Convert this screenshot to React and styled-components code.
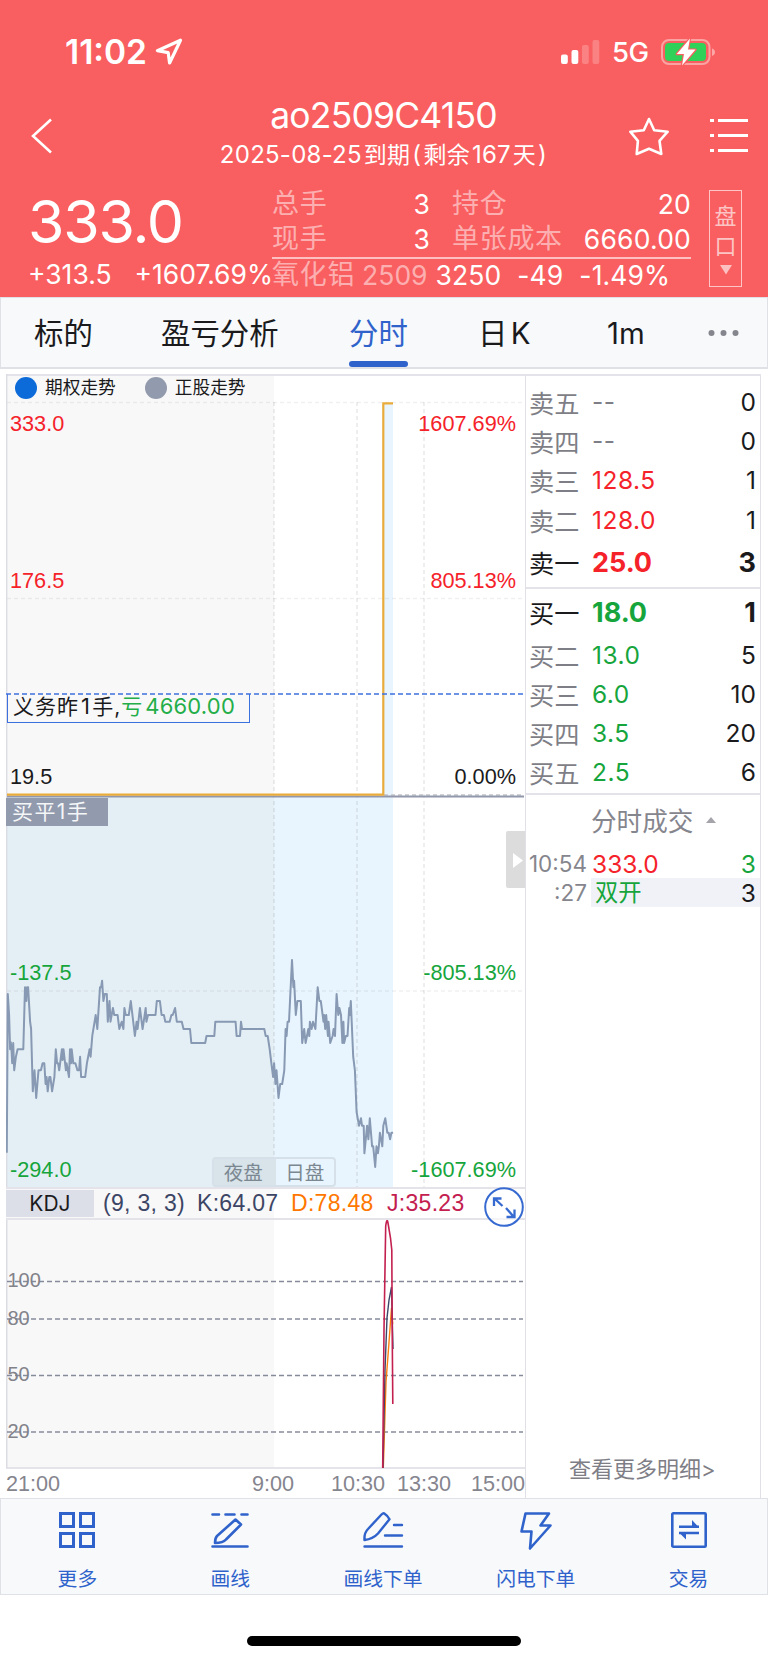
import React from "react";
import styled, { createGlobalStyle, css } from "styled-components";

const GlobalStyle = createGlobalStyle`
  * {
    box-sizing: border-box;
  }
  body {
    margin: 0;
    background: #fff;
    color: #1a1a1c;
    font-family: Inter, "Noto Sans CJK SC", sans-serif;
  }
  p {
    margin: 0;
  }
  svg {
    display: block;
  }
`;

const RED = "#f5222a";
const GREEN = "#16a53c";
const BLUE = "#2f63cb";

const tabs = [
  { label: "标的", width: 57 },
  { label: "盈亏分析", width: 118 },
  { label: "分时", width: 59, active: true },
  { label: "日 K", width: 59 },
  { label: "1m", width: 31 },
];

const asks = [
  { name: "卖五", price: "--", qty: "0" },
  { name: "卖四", price: "--", qty: "0" },
  { name: "卖三", price: "128.5", qty: "1", color: RED },
  { name: "卖二", price: "128.0", qty: "1", color: RED },
  { name: "卖一", price: "25.0", qty: "3", color: RED, best: true },
];

const bids = [
  { name: "买一", price: "18.0", qty: "1", color: GREEN, best: true },
  { name: "买二", price: "13.0", qty: "5", color: GREEN },
  { name: "买三", price: "6.0", qty: "10", color: GREEN },
  { name: "买四", price: "3.5", qty: "20", color: GREEN },
  { name: "买五", price: "2.5", qty: "6", color: GREEN },
];

// underlying price, [time, level]
const underlying = [
  [20, 668], [23, 192], [27, 255], [30, 358], [32, 337], [34, 358], [36, 400], [39, 339],
  [42, 421], [47, 380], [52, 358], [69, 358], [74, 172], [78, 213], [80, 172], [83, 172],
  [89, 275], [92, 297], [97, 484], [102, 421], [107, 504], [114, 421], [121, 421], [126, 400],
  [131, 400], [135, 462], [138, 441], [141, 484], [146, 441], [149, 441], [154, 484], [161, 441],
  [165, 358], [169, 400], [172, 400], [175, 421], [183, 358], [185, 390], [188, 358], [195, 421],
  [197, 400], [204, 441], [207, 358], [210, 400], [212, 358], [217, 400], [223, 400], [229, 421],
  [234, 421], [237, 380], [240, 441], [252, 441], [257, 400], [265, 358], [268, 380], [273, 317],
  [283, 255], [288, 297], [296, 172], [299, 172], [302, 152], [306, 213], [310, 192], [316, 192],
  [319, 275], [324, 213], [327, 275], [334, 234], [338, 255], [348, 255], [353, 297], [360, 275],
  [365, 297], [368, 234], [372, 255], [381, 255], [387, 213], [399, 318], [404, 275], [407, 297],
  [414, 234], [422, 297], [431, 234], [433, 275], [438, 255], [460, 255], [464, 213], [473, 213],
  [478, 255], [485, 255], [489, 275], [502, 275], [507, 255], [511, 255], [518, 234], [523, 275],
  [538, 275], [543, 297], [562, 297], [566, 339], [607, 339], [611, 318], [634, 318], [637, 275],
  [697, 275], [700, 318], [710, 318], [713, 275], [716, 297], [782, 297], [786, 318], [792, 318],
  [798, 358], [803, 400], [808, 441], [811, 400], [815, 462], [818, 421], [824, 504], [829, 462],
  [835, 462], [841, 421], [845, 297], [848, 318], [851, 275], [855, 275], [864, 90], [868, 172],
  [870, 152], [875, 255], [880, 213], [890, 213], [894, 339], [900, 297], [904, 339], [912, 297],
  [915, 318], [917, 275], [922, 297], [926, 275], [933, 297], [940, 172], [945, 213], [949, 213],
  [957, 275], [959, 255], [962, 297], [965, 255], [970, 318], [972, 275], [977, 339], [984, 318],
  [987, 297], [991, 318], [996, 192], [1001, 255], [1004, 234], [1009, 255], [1013, 339], [1016, 275],
  [1018, 339], [1023, 318], [1028, 318], [1033, 234], [1035, 255], [1038, 213], [1045, 380], [1050, 421],
  [1055, 546], [1062, 587], [1068, 565], [1071, 587], [1076, 587], [1078, 670], [1086, 587], [1090, 628],
  [1094, 565], [1101, 649], [1104, 649], [1110, 711], [1114, 649], [1118, 670], [1121, 649], [1124, 608],
  [1131, 649], [1134, 587], [1140, 565], [1146, 608], [1150, 608], [1154, 628], [1158, 608], [1163, 608],
];

const underlyingPoints = underlying
  .map(([t, p]) => `${(t * 0.338 - 6).toFixed(1)},${(556 + p / 3).toFixed(1)}`)
  .join(" ");

const priceLabels = [
  { y: 57, left: "333.0", right: "1607.69%", color: RED },
  { y: 214, left: "176.5", right: "805.13%", color: RED },
  { y: 410, left: "19.5", right: "0.00%", color: "#1a1a1c" },
  { y: 606, left: "-137.5", right: "-805.13%", color: GREEN },
  { y: 803, left: "-294.0", right: "-1607.69%", color: GREEN },
];

const kdjLevels = [
  { y: 61.5, label: "100" },
  { y: 99, label: "80" },
  { y: 155.5, label: "50" },
  { y: 212, label: "20" },
];

function StatusBar() {
  return (
    <Status>
      <div className="time">
        <p>11:02</p>
        <svg width="28" height="28" viewBox="0 0 28 28" fill="none">
          <path
            d="M25.5 2.2 L2.4 12.7 L13.2 14.6 L14.6 25 Z"
            stroke="#fff"
            strokeWidth="3.2"
            strokeLinejoin="round"
          />
        </svg>
      </div>
      <div className="signal">
        <svg width="39" height="24" viewBox="0 0 39 24" fill="#fff">
          <rect x="0" y="14.5" width="6.8" height="9.5" rx="2" />
          <rect x="10.5" y="10" width="6.8" height="14" rx="2" />
          <rect x="21" y="5" width="6.8" height="19" rx="2" opacity=".22" />
          <rect x="31.5" y="0" width="6.8" height="24" rx="2" opacity=".22" />
        </svg>
        <p>5G</p>
        <svg width="55" height="28" viewBox="0 0 55 28">
          <rect x="1" y="2" width="47.5" height="24" rx="7" fill="none" stroke="#fff" strokeOpacity=".42" strokeWidth="2" />
          <path d="M51 10.5 q3 1 3 3.7 q0 2.7 -3 3.7z" fill="#fff" fillOpacity=".45" />
          <rect x="4" y="5" width="41" height="18" rx="4" fill="#30d158" />
          <path
            d="M29 .5 L15.8 16 H23 L21 27.5 L34.5 11.6 H27 Z"
            fill="#fff"
            stroke="#f95f60"
            strokeWidth="2.4"
            strokeLinejoin="round"
            paintOrder="stroke"
          />
        </svg>
      </div>
    </Status>
  );
}

function NavBar() {
  return (
    <Nav>
      <svg width="22" height="36" viewBox="0 0 22 36" fill="none">
        <path d="M20 1.5 L2 18 L20 34.5" stroke="#fff" strokeWidth="2.6" />
      </svg>
      <div className="title">
        <h1>ao2509C4150</h1>
        <p>
          2025-08-25<i>到期</i>(<i>剩余</i>167<i>天</i>)
        </p>
      </div>
      <div className="actions">
        <svg width="42" height="40" viewBox="0 0 42 40" fill="none">
          <path
            d="M21 3 L26.2 14.2 L39.7 15.7 L31.5 24.8 L33.3 38 L21 32.8 L8.7 38 L9.9 24.8 L2.3 15.7 L15.8 14.2 Z"
            stroke="#fff"
            strokeWidth="2.6"
            strokeLinejoin="round"
          />
        </svg>
        <svg width="38" height="34" viewBox="0 0 38 34" fill="#fff">
          {[0, 15, 30].map((y) => (
            <React.Fragment key={y}>
              <rect x="0" y={y} width="4" height="3" />
              <rect x="8" y={y} width="30" height="3" />
            </React.Fragment>
          ))}
        </svg>
      </div>
    </Nav>
  );
}

function Quote() {
  return (
    <QuoteBox>
      <div className="last">
        <p className="price">333.0</p>
        <div className="change">
          <p>+313.5</p>
          <p>+1607.69%</p>
        </div>
      </div>
      <div className="detail">
        <div className="stats">
          <StatLabel>总手</StatLabel>
          <StatValue>3</StatValue>
          <StatLabel>持仓</StatLabel>
          <StatValue>20</StatValue>
          <StatLabel>现手</StatLabel>
          <StatValue>3</StatValue>
          <StatLabel>单张成本</StatLabel>
          <StatValue>6660.00</StatValue>
        </div>
        <div className="future">
          <StatLabel>氧化铝</StatLabel>
          <StatLabel as="b">2509</StatLabel>
          <p>3250</p>
          <p>-49</p>
          <p>-1.49%</p>
        </div>
      </div>
      <Handicap>
        <p>盘</p>
        <p>口</p>
        <svg width="12" height="10" viewBox="0 0 12 10">
          <path d="M0 0 H12 L6 9.5 Z" fill="#fcc0c0" />
        </svg>
      </Handicap>
    </QuoteBox>
  );
}

function PriceChart() {
  return (
    <PricePane>
      <svg width="519" height="813" viewBox="0 0 519 813">
        <rect x="0" y="2" width="268" height="811" fill="#f8f8f8" />
        <rect x="0" y="423" width="268" height="390" fill="#e4eff5" />
        <rect x="268" y="423" width="119" height="390" fill="#e9f5fe" />
        <rect x="378" y="29" width="9" height="394" fill="#e9f5fe" />
        {/* grid */}
        <g stroke="#000" strokeOpacity=".09" strokeWidth="1.5" strokeDasharray="4 3">
          <path d="M1 28.5 H519 M1 224.5 H519 M1 617 H519" strokeOpacity=".06" />
          <path d="M268 28 V813 M351 28 V813 M418 28 V813" />
        </g>
        <path d="M378 421 H518" stroke="#c4c4c8" strokeDasharray="4 3" strokeWidth="1.5" />
        <path d="M.7 0 V813" stroke="#dcdce4" strokeWidth="1.4" />
        {/* grid */}
        <polyline points={underlyingPoints} fill="none" stroke="#8799b3" strokeWidth="2" strokeLinejoin="round" />
        <path d="M1 422.5 H518" stroke="#9198ab" strokeWidth="2.2" />
        <path d="M1 420.7 H377.3 V29.3 H387" fill="none" stroke="#e9ac3b" strokeWidth="2.2" />
        <path d="M0 320 H518" stroke="#3c70de" strokeWidth="1.4" strokeDasharray="5 3" />
        <g fontFamily="Liberation Sans" fontSize="21.7">
          {priceLabels.map((l) => (
            <g key={l.y} fill={l.color}>
              <text x="4" y={l.y}>
                {l.left}
              </text>
              <text x="510" y={l.y} textAnchor="end">
                {l.right}
              </text>
            </g>
          ))}
        </g>
      </svg>
      <Legend>
        <LegendItem $color="#0d6ad9">期权走势</LegendItem>
        <LegendItem $color="#929aad">正股走势</LegendItem>
      </Legend>
      <PositionTag>
        义务昨<span>1</span>手,
        <em>
          亏<span>4660.00</span>
        </em>
      </PositionTag>
      <TradeTag>买平1手</TradeTag>
      <Sessions>
        <p className="night">夜盘</p>
        <p>日盘</p>
      </Sessions>
      <Handle>
        <svg width="10" height="15" viewBox="0 0 10 15">
          <path d="M0 0 L10 7.5 L0 15 Z" fill="#fff" />
        </svg>
      </Handle>
    </PricePane>
  );
}

function KdjChart() {
  return (
    <>
      <KdjBar>
        <p className="name">KDJ</p>
        <KdjValue $w={94}>(9, 3, 3)</KdjValue>
        <KdjValue $w={94}>K:64.07</KdjValue>
        <KdjValue $w={96} $color="#ff7700">
          D:78.48
        </KdjValue>
        <KdjValue $w={90} $color="#c3204f">
          J:35.23
        </KdjValue>
        <Expand>
          <svg width="40" height="40" viewBox="0 0 40 40" fill="none" stroke="#376ad1">
            <circle cx="20" cy="20" r="18.8" strokeWidth="2" fill="#fff" fillOpacity=".6" />
            <path
              d="M18.5 19 L10.5 11.5 M10 19 V11.5 H17.5 M22 21 L29.5 29.5 M30.5 22.5 V30 H22.5"
              strokeWidth="2.3"
            />
          </svg>
        </Expand>
      </KdjBar>
      <svg width="519" height="249" viewBox="0 0 519 249">
        <rect x="0" y="0" width="268" height="248" fill="#f8f8f8" />
        <path d="M.7 0 V248 H519" fill="none" stroke="#dcdce4" strokeWidth="1.6" />
        {kdjLevels.map((l) => (
          <g key={l.label}>
            <path d={`M1 ${l.y} H517`} stroke="#868b9c" strokeWidth="1.5" strokeDasharray="5 3" />
            <text x="1.5" y={l.y + 5.5} fontFamily="Liberation Sans" fontSize="20" fill="#82828a">
              {l.label}
            </text>
          </g>
        ))}
        <g fill="none" strokeWidth="1.4">
          <path d="M377.3 248 L380 162 L382.8 125 L385.5 88 L386.7 104" stroke="#ff7f0e" />
          <path d="M377 248 L379 150 L381 98 L383 80 L385.5 67 L387 129" stroke="#3c4668" />
          <path
            d="M376.7 248 L378 110 L379.7 6 Q381 -3 382 3 L384.5 18 L385.8 30 L386.2 110 L386.8 184"
            stroke="#c3204f"
            strokeWidth="1.6"
          />
        </g>
      </svg>
      <TimeAxis>
        <p>21:00</p>
        <p>9:00</p>
        <p>10:30</p>
        <p>13:30</p>
        <p>15:00</p>
      </TimeAxis>
    </>
  );
}

function OrderBook() {
  const row = (r) => (
    <BookRow key={r.name} $best={r.best} $color={r.color}>
      <p className="name">{r.name}</p>
      <p className="price">{r.price}</p>
      <p className="qty">{r.qty}</p>
    </BookRow>
  );

  return (
    <Book>
      <BookSide $h={213} $top={6.5}>
        {asks.map(row)}
      </BookSide>
      <BookSide $h={206} $top={0}>
        {bids.map(row)}
      </BookSide>
      <TicksTitle>
        <p>分时成交</p>
        <svg width="10" height="6" viewBox="0 0 10 6">
          <path d="M5 0 L10 6 H0 Z" fill="#a4a4aa" />
        </svg>
      </TicksTitle>
      <Tick>
        <p className="time">10:54</p>
        <div className="fill">
          <p className="up">333.0</p>
          <p className="open">3</p>
        </div>
      </Tick>
      <Tick $shade>
        <p className="time">:27</p>
        <div className="fill">
          <p className="kind">双开</p>
          <p>3</p>
        </div>
      </Tick>
      <More>查看更多明细&gt;</More>
    </Book>
  );
}

function BottomBar() {
  return (
    <Bottom>
      <BottomItem>
        <svg width="36" height="36" viewBox="0 0 36 36" strokeWidth="3">
          <rect x="1.5" y="1.5" width="13" height="13" />
          <rect x="21.5" y="1.5" width="13" height="13" />
          <rect x="1.5" y="21.5" width="13" height="13" />
          <rect x="21.5" y="21.5" width="13" height="13" />
        </svg>
        <p>更多</p>
      </BottomItem>
      <BottomItem>
        <svg width="38" height="36" viewBox="0 0 38 36" strokeWidth="2.6">
          <path
            d="M1.5 2.5 H8 M14.5 2.5 H23.5 M30.5 2.5 H36.5 M1.5 34.5 H36.5"
            strokeLinecap="round"
          />
          <path d="M24.5 7.5 L30 12.5 L15 27.5 Q12 31 4 31 Q4 26 6 24 Z" strokeLinejoin="round" />
        </svg>
        <p>画线</p>
      </BottomItem>
      <BottomItem>
        <svg width="40" height="36" viewBox="0 0 40 36" strokeWidth="2.4">
          <path d="M31 13 H39 M22 23.5 H39 M1.5 34.5 H39" strokeLinecap="round" />
          <path
            d="M21 1.3 Q25 4 26.5 7.3 L15 21.5 Q10 27 1.5 28 Q1 21 5 17 L18.5 2.5 Q20 1 21 1.3 Z"
            strokeLinejoin="round"
          />
        </svg>
        <p>画线下单</p>
      </BottomItem>
      <BottomItem>
        <svg width="32" height="38" viewBox="0 0 32 38" strokeWidth="2.6">
          <path d="M5.5 1.5 H29 L20.5 13.5 H30.5 L10 36.5 L11.5 19.5 H1.5 Z" strokeLinejoin="round" />
        </svg>
        <p>闪电下单</p>
      </BottomItem>
      <BottomItem>
        <svg width="36" height="36" viewBox="0 0 36 36" strokeWidth="2.6">
          <rect x="1.3" y="1.3" width="33.4" height="33.4" rx="1" />
          <path d="M8 14.7 H28 M8 21 H28" />
          <path d="M21 8 L27.5 15 H21 Z M15 27.5 L8.5 21 H15 Z" fill={BLUE} stroke="none" />
        </svg>
        <p>交易</p>
      </BottomItem>
    </Bottom>
  );
}

function App() {
  return (
    <Screen>
      <GlobalStyle />
      {/* header */}
      <Header>
        <StatusBar />
        <NavBar />
        <Quote />
      </Header>
      {/* header */}

      <Tabs>
        {tabs.map((t) => (
          <Tab key={t.label} $w={t.width} $active={t.active}>
            {t.label}
          </Tab>
        ))}
        <svg width="32" height="8" viewBox="0 0 32 8" fill="#85858d">
          <circle cx="3.5" cy="4" r="3" />
          <circle cx="15.5" cy="4" r="3" />
          <circle cx="27.5" cy="4" r="3" />
        </svg>
      </Tabs>

      {/* content */}
      <Content>
        <ChartColumn>
          <PriceChart />
          <KdjChart />
        </ChartColumn>
        <OrderBook />
      </Content>
      {/* content */}

      <BottomBar />
      <Home>
        <span />
      </Home>
    </Screen>
  );
}

export default App;

const Screen = styled.main`
  width: 768px;
  height: 1663px;
  display: flex;
  flex-direction: column;
  overflow: hidden;
  background: #fff;
`;

const Header = styled.header`
  height: 297px;
  flex: none;
  background: #f95f60;
  color: #fff;
`;

const Status = styled.div`
  height: 96px;
  padding: 7px 52px 0 65px;
  display: flex;
  justify-content: space-between;
  align-items: center;
  .time {
    display: flex;
    align-items: center;
    gap: 8px;
    p {
      width: 82px;
      font-size: 33.5px;
      font-weight: 600;
      letter-spacing: 0;
      white-space: nowrap;
    }
  }
  .signal {
    display: flex;
    align-items: center;
    p {
      width: 61px;
      padding-left: 12px;
      font-size: 27.5px;
      font-weight: 500;
      letter-spacing: -0.6px;
    }
  }
`;

const Nav = styled.div`
  height: 80px;
  padding: 0 20px 0 31px;
  display: grid;
  grid-template-columns: 118px 1fr 120px;
  align-items: center;
  .title {
    text-align: center;
    margin: -7px 5px 0 -5px;
    h1 {
      margin: 2px 0 0;
      font-size: 35.5px;
      line-height: 42px;
      font-weight: 400;
      letter-spacing: -0.8px;
    }
    p {
      font-size: 24px;
      line-height: 36px;
      letter-spacing: 0.25px;
      white-space: nowrap;
    }
    i {
      font-style: normal;
      font-size: 23px;
      margin: 0 2px;
    }
  }
  .actions {
    display: flex;
    align-items: center;
    justify-content: space-between;
  }
`;

const QuoteBox = styled.div`
  height: 121px;
  padding: 10px 26px 0 28px;
  display: flex;
  .last {
    width: 244px;
  }
  .price {
    height: 72px;
    font-size: 59px;
    line-height: 71px;
    letter-spacing: -1.2px;
  }
  .change {
    display: flex;
    gap: 23px;
    font-size: 26.5px;
    line-height: 32px;
    letter-spacing: 0;
    white-space: nowrap;
  }
  .detail {
    width: 419px;
    margin-right: 18px;
  }
  .stats {
    display: grid;
    grid-template-columns: 70px 88px 1fr 120px;
    grid-auto-rows: 35.5px;
    align-items: center;
    border-bottom: 2px solid #fdbfc0;
    > :nth-child(4n + 3) {
      padding-left: 22px;
    }
  }
  .future {
    display: flex;
    height: 32px;
    align-items: center;
    font-size: 26.5px;
    letter-spacing: 0.1px;
    white-space: nowrap;
    b {
      margin: 0 8px 0 7px;
      font-size: 26.5px;
      font-weight: 400;
      letter-spacing: 0;
    }
    p + p {
      margin-left: 16px;
    }
  }
`;

const StatLabel = styled.p`
  font-size: 27px;
  line-height: 34px;
  letter-spacing: 0.7px;
  color: #fcafb0;
  white-space: nowrap;
`;

const StatValue = styled.p`
  font-size: 26.5px;
  line-height: 34px;
  letter-spacing: 0.2px;
  text-align: right;
`;

const Handicap = styled.div`
  width: 33px;
  height: 97px;
  margin-top: 4px;
  padding-top: 10px;
  border: 1.5px solid #fdc5c5;
  color: #fcc5c5;
  display: flex;
  flex-direction: column;
  align-items: center;
  p {
    font-size: 22px;
    line-height: 30px;
  }
  svg {
    margin-top: 4px;
  }
`;

const Tabs = styled.nav`
  height: 72px;
  flex: none;
  padding: 0 27px 0 33px;
  display: flex;
  justify-content: space-between;
  align-items: center;
  background: #f7f9fb;
  border: 1px solid #dfe1e6;
  border-bottom-width: 2px;
`;

const Tab = styled.div`
  width: ${(p) => p.$w}px;
  height: 70px;
  font-size: 29.4px;
  line-height: 71px;
  word-spacing: -5px;
  white-space: nowrap;
  ${(p) =>
    p.$active &&
    css`
      color: ${BLUE};
      &::after {
        content: "";
        display: block;
        margin-top: -8px;
        height: 6px;
        border-radius: 3px;
        background: ${BLUE};
      }
    `}
`;

const Content = styled.section`
  height: 1124px;
  flex: none;
  margin: 5px 7px 0 6px;
  display: flex;
  border-top: 2px solid #e3e3e9;
`;

const ChartColumn = styled.div`
  width: 519px;
  display: flex;
  flex-direction: column;
`;

const PricePane = styled.div`
  position: relative;
  height: 811px;
  > svg {
    margin-top: -2px;
  }
`;

const Legend = styled.div`
  position: absolute;
  top: 0;
  left: 9px;
  display: flex;
  gap: 29px;
`;

const LegendItem = styled.p`
  display: flex;
  align-items: center;
  gap: 8px;
  font-size: 17.7px;
  line-height: 23px;
  &::before {
    content: "";
    width: 22px;
    height: 22px;
    border-radius: 50%;
    background: ${(p) => p.$color};
  }
`;

const PositionTag = styled.p`
  position: absolute;
  top: 318px;
  left: 1px;
  width: 243px;
  height: 29px;
  padding-left: 5px;
  border: 1.5px solid #3c70de;
  border-top: none;
  font-size: 21px;
  line-height: 25px;
  letter-spacing: 1px;
  white-space: nowrap;
  em {
    font-style: normal;
    color: #23ae49;
  }
  span {
    margin: 0 2px;
    font-size: 22px;
    letter-spacing: 0.2px;
  }
`;

const TradeTag = styled.p`
  position: absolute;
  top: 422px;
  left: 0;
  width: 102px;
  height: 28px;
  padding-left: 6px;
  background: #929aad;
  color: #f4f6f8;
  font-size: 21px;
  line-height: 28px;
  letter-spacing: 1.4px;
`;

const Sessions = styled.div`
  position: absolute;
  left: 206px;
  top: 781px;
  width: 124px;
  height: 30px;
  display: flex;
  border: 2px solid #d5e0e8;
  border-radius: 4px;
  p {
    flex: 1;
    text-align: center;
    font-size: 19.5px;
    line-height: 28px;
    color: #7b8891;
  }
  .night {
    padding-right: 3px;
    background: #d8e3ea;
  }
`;

const Handle = styled.div`
  position: absolute;
  right: 0;
  top: 455px;
  width: 19px;
  height: 57px;
  padding: 22px 0 0 7px;
  background: #dcdcdc;
  border-radius: 2px 0 0 2px;
`;

const KdjBar = styled.div`
  position: relative;
  height: 33px;
  display: flex;
  align-items: center;
  border-top: 2px solid #e3e3e9;
  border-bottom: 2px solid #e3e3e9;
  background: linear-gradient(90deg, #f8f8f8 268px, #fff 268px);
  .name {
    width: 88px;
    height: 27px;
    margin-right: 9px;
    background: #dcdee8;
    text-align: center;
    font-size: 21px;
    line-height: 27px;
  }
`;

const KdjValue = styled.p`
  width: ${(p) => p.$w}px;
  color: ${(p) => p.$color || "#3c4565"};
  font-family: "Liberation Sans", sans-serif;
  font-size: 23px;
  line-height: 27px;
  letter-spacing: 0.3px;
  white-space: nowrap;
`;

const Expand = styled.div`
  position: absolute;
  right: 1px;
  top: -2px;
`;

const TimeAxis = styled.div`
  height: 29px;
  display: grid;
  grid-template-columns: 246px 79px 66px 70px 1fr;
  font-family: "Liberation Sans", sans-serif;
  font-size: 21.6px;
  line-height: 29px;
  color: #85858e;
  p:last-child {
    text-align: right;
  }
`;

const Book = styled.div`
  width: 236px;
  display: flex;
  flex-direction: column;
  border-left: 1.5px solid #e0e0e6;
  border-right: 1.5px solid #e0e0e6;
`;

const BookSide = styled.div`
  height: ${(p) => p.$h}px;
  padding-top: ${(p) => p.$top}px;
  border-bottom: 2px solid #e3e3e9;
`;

const BookRow = styled.div`
  height: ${(p) => (p.$best ? 46 : 39.2)}px;
  padding: 0 4px 0 3px;
  display: grid;
  grid-template-columns: 63px 1fr auto;
  align-items: center;
  font-size: 24.5px;
  .name {
    color: ${(p) => (p.$best ? "#1a1a1c" : "#7e7e86")};
    font-size: 25.2px;
  }
  .price {
    color: ${(p) => p.$color || "#7e7e86"};
    letter-spacing: 0.5px;
  }
  .price,
  .qty {
    ${(p) => p.$best && "font-size: 27px; font-weight: 700; letter-spacing: 0;"}
  }
`;

const TicksTitle = styled.div`
  height: 54px;
  padding: 0 0 5px 65px;
  display: flex;
  align-items: center;
  gap: 13px;
  font-size: 25.6px;
  color: #85858d;
`;

const Tick = styled.div`
  height: 29px;
  display: flex;
  align-items: center;
  .time {
    width: 65px;
    padding-right: 4px;
    text-align: right;
    font-size: 22.5px;
    color: #85858d;
  }
  .fill {
    flex: 1;
    height: 29px;
    padding: 0 4px 0 1px;
    display: flex;
    justify-content: space-between;
    align-items: center;
    font-size: 24.5px;
    background: ${(p) => (p.$shade ? "#f0f2f8" : "transparent")};
  }
  .up {
    color: ${RED};
  }
  .open {
    color: ${GREEN};
  }
  .kind {
    padding: 0 0 3px 3px;
    font-size: 23.3px;
    color: ${GREEN};
  }
`;

const More = styled.p`
  margin: auto 0 13px;
  padding-left: 43px;
  font-size: 22px;
  line-height: 32px;
  color: #7e7e86;
`;

const Bottom = styled.footer`
  height: 97px;
  flex: none;
  padding-right: 2px;
  display: flex;
  background: #f7f9fb;
  border: 1.5px solid #dfe1e6;
`;

const BottomItem = styled.div`
  flex: 1;
  padding-top: 13px;
  display: flex;
  flex-direction: column;
  align-items: center;
  color: ${BLUE};
  svg {
    fill: none;
    stroke: ${BLUE};
    overflow: visible;
  }
  p {
    margin-top: auto;
    font-size: 19.8px;
    line-height: 29px;
  }
`;

const Home = styled.div`
  flex: 1;
  display: flex;
  justify-content: center;
  align-items: flex-end;
  padding-bottom: 17px;
  span {
    width: 274px;
    height: 10px;
    border-radius: 5px;
    background: #000;
  }
`;
